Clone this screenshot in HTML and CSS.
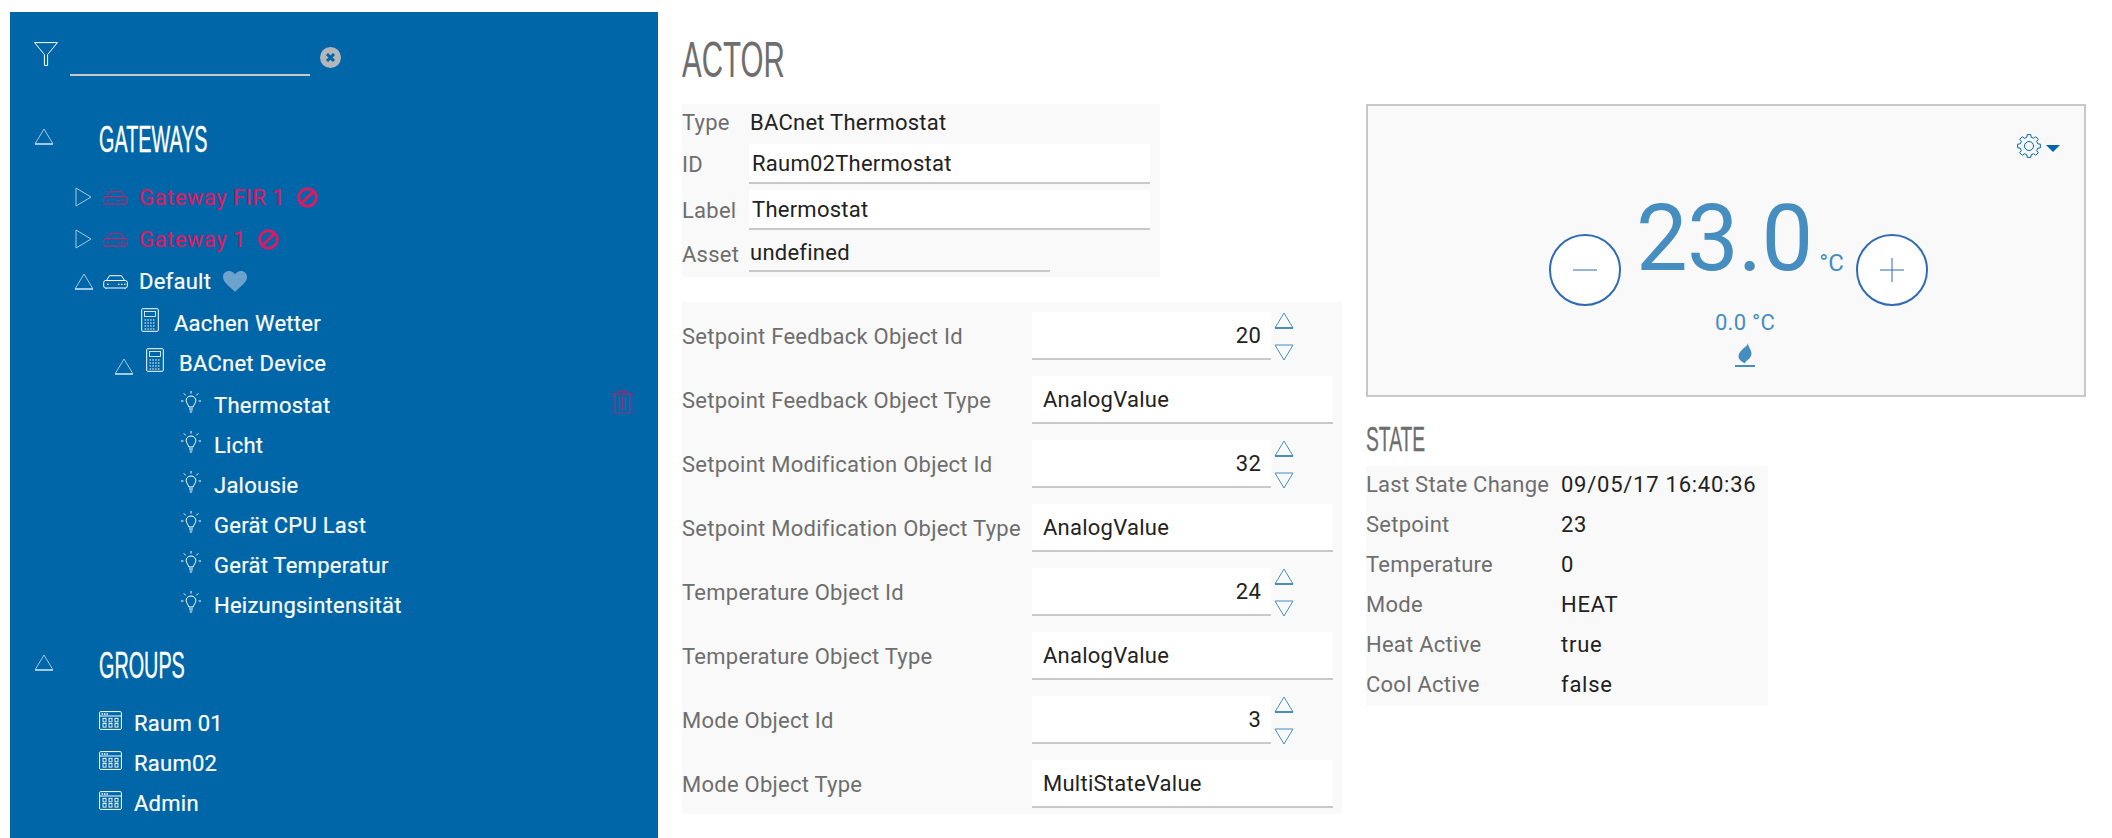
FILE: index.html
```html
<!DOCTYPE html>
<html lang="en">

<head>
    <meta charset="UTF-8">
    <meta name="viewport" content="width=device-width, initial-scale=1.0">
    <title>Actor</title>
    <link rel="stylesheet" href="styles.css">
</head>

<body>
    <!-- icons used more than once -->
    <svg class="defs" width="0" height="0">
        <symbol id="tri-up" viewBox="0 0 20 17">
            <path d="M10 1 L19 16 H1 Z" fill="none" stroke="currentColor" stroke-width="1" />
            <path d="M1 16 H19" stroke="currentColor" stroke-width="2" />
        </symbol>
        <symbol id="tri-down" viewBox="0 0 20 17">
            <path d="M10 16 L19 1 H1 Z" fill="none" stroke="currentColor" stroke-width="1" />
        </symbol>
        <symbol id="tri-right" viewBox="0 0 17 20">
            <path d="M16 10 L1 1 V19 Z" fill="none" stroke="currentColor" stroke-width="1" />
        </symbol>
        <symbol id="gateway" viewBox="0 0 25 14">
            <path d="M3.5 5.5 L6.5 0.7 H18.5 L21.5 5.5" fill="none" stroke="currentColor" />
            <rect x="0.7" y="5.5" width="23.6" height="7.5" rx="2" fill="none" stroke="currentColor" />
            <path d="M3 13 v1 M22 13 v1" stroke="currentColor" />
            <path d="M4 9.3 h1.6 M15 9.3 h1.4 M18 9.3 h1.4 M21 9.3 h1.4" stroke="currentColor" stroke-width="1.3" />
        </symbol>
        <symbol id="ban" viewBox="0 0 21 21">
            <circle cx="10.5" cy="10.5" r="8.8" fill="none" stroke="currentColor" stroke-width="3" />
            <path d="M5 16 L16 5" stroke="currentColor" stroke-width="3" />
        </symbol>
        <symbol id="calc" viewBox="0 0 18 24">
            <rect x="0.7" y="0.7" width="16.6" height="22.6" rx="1" fill="none" stroke="#fff" />
            <rect x="3.5" y="3.5" width="11" height="5" fill="none" stroke="#fff" stroke-width="0.8" />
            <path d="M3.5 12 H14.5 M3.5 15 H14.5 M3.5 18 H14.5 M3.5 21 H14.5" stroke="#fff" stroke-width="1.2" stroke-dasharray="1.6 1.2" />
        </symbol>
        <symbol id="bulb" viewBox="0 0 20 22">
            <path d="M10 5 C6.8 5 5.2 7.3 5.2 9.6 C5.2 12.3 7.4 13.4 7.8 16 H12.2 C12.6 13.4 14.8 12.3 14.8 9.6 C14.8 7.3 13.2 5 10 5 Z" fill="none" stroke="#fff" />
            <path d="M8 18 H12 M8.6 20 H11.4 M9.4 21.7 H10.6" stroke="#fff" />
            <path d="M10 0 V2.6 M2.8 2.4 L4.6 4.4 M17.2 2.4 L15.4 4.4 M0 10 H2.4 M17.6 10 H20" stroke="#fff" />
        </symbol>
        <symbol id="group" viewBox="0 0 23 19">
            <rect x="0.6" y="0.6" width="21.8" height="17.8" rx="1.2" fill="none" stroke="#fff" />
            <path d="M0.6 5 H22.4" stroke="#fff" />
            <path d="M2.6 2.9 H9" stroke="#fff" stroke-width="1.5" stroke-dasharray="1.5 0.9" />
            <rect x="4" y="7.3" width="3" height="3.6" fill="none" stroke="#fff" stroke-width="0.9" />
            <rect x="10" y="7.3" width="3" height="3.6" fill="none" stroke="#fff" stroke-width="0.9" />
            <rect x="16" y="7.3" width="3" height="3.6" fill="none" stroke="#fff" stroke-width="0.9" />
            <rect x="4" y="12.5" width="3" height="3.6" fill="none" stroke="#fff" stroke-width="0.9" />
            <rect x="10" y="12.5" width="3" height="3.6" fill="none" stroke="#fff" stroke-width="0.9" />
            <rect x="16" y="12.5" width="3" height="3.6" fill="none" stroke="#fff" stroke-width="0.9" />
        </symbol>
    </svg>

    <div class="page">
        <!-- left tree -->
        <div class="side">
            <div class="filter">
                <svg class="filter-icon" width="24" height="24" viewBox="0 0 24 24">
                    <path d="M0.6 0.6 H23.4 L13.6 12.6 V23.4 H10.4 V12.6 Z" fill="none" stroke="#fff" />
                </svg>
                <div class="filter-input"></div>
                <svg class="filter-clear" width="21" height="21" viewBox="0 0 21 21">
                    <circle cx="10.5" cy="10.5" r="10.5" fill="#b4b7ba" />
                    <path d="M7 7 L14 14 M14 7 L7 14" stroke="#0066a8" stroke-width="3" />
                </svg>
            </div>

            <div class="head">
                <svg class="tri" width="20" height="17"><use href="#tri-up" /></svg>
                <span class="head-text">GATEWAYS</span>
            </div>

            <div class="tree">
                <div class="row row-gw off">
                    <svg class="tri" width="17" height="20"><use href="#tri-right" /></svg>
                    <svg class="gw" width="25" height="14"><use href="#gateway" /></svg>
                    <span class="wide-name">Gateway FIR 1</span>
                    <svg class="badge" width="21" height="21"><use href="#ban" /></svg>
                </div>
                <div class="row row-gw off">
                    <svg class="tri" width="17" height="20"><use href="#tri-right" /></svg>
                    <svg class="gw" width="25" height="14"><use href="#gateway" /></svg>
                    <span class="wide-name">Gateway 1</span>
                    <svg class="badge" width="21" height="21"><use href="#ban" /></svg>
                </div>
                <div class="row row-gw">
                    <svg class="tri tri-open" width="20" height="17"><use href="#tri-up" /></svg>
                    <svg class="gw" width="25" height="14"><use href="#gateway" /></svg>
                    <span>Default</span>
                    <svg class="heart" width="24" height="21" viewBox="0 0 24 21">
                        <path d="M12 21 C8 16 0 12 0 6 C0 2.5 2.6 0 6 0 C8.6 0 10.8 1.4 12 3.6 C13.2 1.4 15.4 0 18 0 C21.4 0 24 2.5 24 6 C24 12 16 16 12 21 Z" fill="#6ba3cc" />
                    </svg>
                </div>
                <div class="row row-dev">
                    <svg class="ic" width="18" height="24"><use href="#calc" /></svg>
                    <span>Aachen Wetter</span>
                </div>
                <div class="row row-dev2 tight">
                    <svg class="tri" width="20" height="17"><use href="#tri-up" /></svg>
                    <svg class="ic" width="18" height="24"><use href="#calc" /></svg>
                    <span>BACnet Device</span>
                </div>
                <div class="row row-actor">
                    <svg class="ic" width="20" height="22"><use href="#bulb" /></svg>
                    <span>Thermostat</span>
                    <svg class="trash" width="21" height="24" viewBox="0 0 21 24">
                        <path d="M0 4 H21 M7 4 V1 H14 V4" fill="none" stroke="#c2185b" stroke-width="1.2" />
                        <path d="M3 4 V23 H18 V4" fill="none" stroke="#8f3a80" stroke-width="1.2" />
                        <path d="M7.5 7 V20 M10.5 7 V20 M13.5 7 V20" stroke="#8f3a80" stroke-width="1.2" />
                    </svg>
                </div>
                <div class="row row-actor tight">
                    <svg class="ic" width="20" height="22"><use href="#bulb" /></svg>
                    <span>Licht</span>
                </div>
                <div class="row row-actor tight">
                    <svg class="ic" width="20" height="22"><use href="#bulb" /></svg>
                    <span>Jalousie</span>
                </div>
                <div class="row row-actor tight">
                    <svg class="ic" width="20" height="22"><use href="#bulb" /></svg>
                    <span>Gerät CPU Last</span>
                </div>
                <div class="row row-actor tight">
                    <svg class="ic" width="20" height="22"><use href="#bulb" /></svg>
                    <span>Gerät Temperatur</span>
                </div>
                <div class="row row-actor tight">
                    <svg class="ic" width="20" height="22"><use href="#bulb" /></svg>
                    <span>Heizungsintensität</span>
                </div>
            </div>

            <div class="head head-groups">
                <svg class="tri" width="20" height="17"><use href="#tri-up" /></svg>
                <span class="head-text">GROUPS</span>
            </div>

            <div class="tree tree-groups">
                <div class="row row-group tight">
                    <svg class="ic" width="23" height="19"><use href="#group" /></svg>
                    <span>Raum 01</span>
                </div>
                <div class="row row-group tight">
                    <svg class="ic" width="23" height="19"><use href="#group" /></svg>
                    <span>Raum02</span>
                </div>
                <div class="row row-group tight">
                    <svg class="ic" width="23" height="19"><use href="#group" /></svg>
                    <span>Admin</span>
                </div>
            </div>
        </div>

        <!-- actor form -->
        <div class="form-col">
            <h1 class="title"><span>ACTOR</span></h1>
            <div class="panel-info">
                <div class="info-row info-text"><label>Type</label><span class="val">BACnet Thermostat</span></div>
                <div class="info-row info-id"><label>ID</label><div class="field">Raum02Thermostat</div></div>
                <div class="info-row info-label"><label>Label</label><div class="field">Thermostat</div></div>
                <div class="info-row info-text info-asset"><label>Asset</label><div class="val asset">undefined</div></div>
            </div>

            <div class="panel-obj">
                <div class="obj-row">
                    <label>Setpoint Feedback Object Id</label>
                    <div class="field num">20</div>
                    <div class="stepper">
                        <svg width="20" height="17"><use href="#tri-up" /></svg>
                        <svg width="20" height="17"><use href="#tri-down" /></svg>
                    </div>
                </div>
                <div class="obj-row">
                    <label>Setpoint Feedback Object Type</label>
                    <div class="field wide">AnalogValue</div>
                </div>
                <div class="obj-row">
                    <label>Setpoint Modification Object Id</label>
                    <div class="field num">32</div>
                    <div class="stepper">
                        <svg width="20" height="17"><use href="#tri-up" /></svg>
                        <svg width="20" height="17"><use href="#tri-down" /></svg>
                    </div>
                </div>
                <div class="obj-row">
                    <label>Setpoint Modification Object Type</label>
                    <div class="field wide">AnalogValue</div>
                </div>
                <div class="obj-row">
                    <label>Temperature Object Id</label>
                    <div class="field num">24</div>
                    <div class="stepper">
                        <svg width="20" height="17"><use href="#tri-up" /></svg>
                        <svg width="20" height="17"><use href="#tri-down" /></svg>
                    </div>
                </div>
                <div class="obj-row">
                    <label>Temperature Object Type</label>
                    <div class="field wide">AnalogValue</div>
                </div>
                <div class="obj-row">
                    <label>Mode Object Id</label>
                    <div class="field num">3</div>
                    <div class="stepper">
                        <svg width="20" height="17"><use href="#tri-up" /></svg>
                        <svg width="20" height="17"><use href="#tri-down" /></svg>
                    </div>
                </div>
                <div class="obj-row">
                    <label>Mode Object Type</label>
                    <div class="field wide">MultiStateValue</div>
                </div>
            </div>
        </div>

        <!-- thermostat and state -->
        <div class="state-col">
            <div class="card">
                <div class="card-menu">
                    <svg width="24" height="24" viewBox="0 0 24 24">
                        <path d="M20.73 9.82 L23.36 10.2 V13.8 L20.73 14.18 L19.71 16.64 L21.3 18.76 L18.76 21.3 L16.64 19.71 L14.18 20.73 L13.8 23.36 H10.2 L9.82 20.73 L7.36 19.71 L5.24 21.3 L2.7 18.76 L4.29 16.64 L3.27 14.18 L0.64 13.8 V10.2 L3.27 9.82 L4.29 7.36 L2.7 5.24 L5.24 2.7 L7.36 4.29 L9.82 3.27 L10.2 0.64 H13.8 L14.18 3.27 L16.64 4.29 L18.76 2.7 L21.3 5.24 L19.71 7.36 Z" fill="none" stroke="#0066a8" />
                        <circle cx="12" cy="12" r="4.5" fill="none" stroke="#0066a8" />
                    </svg>
                    <span class="caret"></span>
                </div>
                <div class="dial">
                    <div class="round">
                        <svg width="24" height="24" viewBox="0 0 24 24"><path d="M0 12 H24" stroke="#2f6ab5" /></svg>
                    </div>
                    <div class="temp">23.0</div>
                    <div class="unit">°C</div>
                    <div class="round">
                        <svg width="24" height="24" viewBox="0 0 24 24"><path d="M0 12 H24 M12 0 V24" stroke="#2f6ab5" /></svg>
                    </div>
                </div>
                <div class="current">0.0 °C</div>
                <svg class="flame" width="20" height="24" viewBox="0 0 20 24">
                    <path d="M13 0 C12.5 4 3.5 7 3.5 13.5 C3.5 16.5 6.5 18.5 10 20.5 C9.5 18 16.5 16 16.5 10.5 C16.5 6.5 13 4 13 0 Z" fill="#468dc0" />
                    <path d="M0 23 H20" stroke="#468dc0" stroke-width="2" />
                </svg>
            </div>

            <h2 class="subtitle"><span>STATE</span></h2>
            <div class="panel-state">
                <div class="state-row"><label>Last State Change</label><span class="state-val">09/05/17 16:40:36</span></div>
                <div class="state-row"><label>Setpoint</label><span class="state-val">23</span></div>
                <div class="state-row"><label>Temperature</label><span class="state-val">0</span></div>
                <div class="state-row"><label>Mode</label><span class="state-val">HEAT</span></div>
                <div class="state-row"><label>Heat Active</label><span class="state-val">true</span></div>
                <div class="state-row"><label>Cool Active</label><span class="state-val">false</span></div>
            </div>
        </div>
    </div>
</body>

</html>
```

FILE: styles.css
```css
body {
    margin: 0;
    background-color: #fff;
    color: #222;
    font-family: "Roboto", "Liberation Sans", sans-serif;
    font-size: 22px;
    letter-spacing: 0.25px;
}

.defs {
    display: block;
}

.page {
    display: flex;
    height: 838px;
    overflow: hidden;
    padding-left: 10px;
    box-sizing: border-box;
}

/* left tree */
.side {
    width: 648px;
    margin-top: 12px;
    padding: 30px 24px 0 24px;
    box-sizing: border-box;
    background-color: #0066a8;
    color: #fff;
    flex-shrink: 0;
}

.filter {
    display: flex;
    align-items: flex-start;
    height: 34px;
}

.filter-input {
    width: 240px;
    height: 32px;
    margin-left: 12px;
    border-bottom: 2px solid #c8c8c8;
}

.filter-clear {
    margin: 5px 0 0 10px;
}

.head {
    display: flex;
    height: 40px;
    margin-top: 44px;
    align-items: center;
}

.head .tri {
    width: 20px;
    margin-bottom: 7px;
}

.tri {
    color: #a3c8e2;
}

.head-text {
    display: inline-block;
    margin-left: 45px;
    font-family: "Liberation Sans", sans-serif;
    font-size: 36px;
    line-height: 40px;
    letter-spacing: 0;
    -webkit-text-stroke: 0.4px #fff;
    transform: scaleX(0.55);
    transform-origin: left center;
}

.head-groups {
    margin-top: 21px;
}

.tree {
    margin-top: 17px;
}

.tree-groups {
    margin-top: 17px;
}

.row {
    display: flex;
    height: 40px;
    margin-top: 2px;
    align-items: center;
    white-space: nowrap;
    -webkit-text-stroke: 0.2px currentColor;
}

.row.tight {
    margin-top: 0;
}

.ic {
    margin-bottom: 6px;
    flex-shrink: 0;
}

.row-gw {
    padding-left: 41px;
}

.row-gw .tri {
    margin: 0 11px 0 0;
}

.row-gw .tri-open {
    margin: 0 9px 0 -1px;
}

.row-gw .gw {
    margin: 2px 11px 0 0;
}

.off {
    color: #dc1a64;
}

.wide-name {
    letter-spacing: 0.5px;
}

.badge {
    margin-left: 12px;
}

.heart {
    margin-left: 12px;
}

.row-dev {
    padding-left: 107px;
}

.row-dev .ic {
    margin-right: 15px;
}

.row-dev2 {
    padding-left: 80px;
}

.row-dev2 .tri {
    margin: 6px 12px 0 0;
}

.row-dev2 .ic {
    margin-right: 15px;
}

.row-actor {
    padding-left: 147px;
}

.row-actor .ic {
    margin-right: 13px;
}

.trash {
    margin: 0 1px 6px auto;
}

.row-group {
    padding-left: 65px;
}

.row-group .ic {
    margin-right: 12px;
}

/* actor form */
.form-col {
    width: 662px;
    margin-left: 24px;
    flex-shrink: 0;
}

.title {
    height: 104px;
    margin: 0;
    font-family: "Liberation Sans", sans-serif;
    font-size: 50px;
    font-weight: normal;
    line-height: 120px;
    letter-spacing: 0;
    color: #6e6e6e;
    box-sizing: border-box;
}

.title span,
.subtitle span {
    display: inline-block;
    transform: scaleX(0.59);
    transform-origin: left center;
}

label {
    color: #6e6e6e;
}

.panel-info {
    width: 478px;
    height: 173px;
    background-color: #f9f9f9;
}

.info-row {
    display: flex;
    align-items: center;
}

.info-row label {
    width: 67px;
    flex-shrink: 0;
}

.info-text {
    height: 36px;
}

.info-id {
    margin-top: 4px;
}

.info-label {
    margin-top: 6px;
}

.info-asset {
    margin-top: 6px;
}

.val {
    padding-left: 1px;
}

.asset {
    width: 300px;
    line-height: 34px;
    border-bottom: 2px solid #c8c8c8;
}

.field {
    display: flex;
    align-items: center;
    box-sizing: border-box;
    background-color: #fff;
    border-bottom: 2px solid #c8c8c8;
}

.info-row .field {
    width: 401px;
    height: 40px;
    padding-left: 3px;
}

.panel-obj {
    width: 660px;
    margin-top: 25px;
    padding: 10px 0 6px;
    box-sizing: border-box;
    background-color: #f9f9f9;
    display: flex;
    flex-direction: column;
    gap: 16px;
}

.obj-row {
    display: flex;
    height: 48px;
    align-items: center;
}

.obj-row label {
    width: 350px;
    flex-shrink: 0;
}

.obj-row .field {
    height: 48px;
}

.field.num {
    width: 239px;
    padding-right: 10px;
    justify-content: flex-end;
}

.field.wide {
    width: 301px;
    padding-left: 11px;
}

.stepper {
    display: flex;
    height: 49px;
    margin-left: 3px;
    flex-direction: column;
    justify-content: space-between;
    color: #468dc0;
}

/* thermostat and state */
.state-col {
    width: 720px;
    margin-left: 22px;
    flex-shrink: 0;
}

.card {
    position: relative;
    width: 720px;
    height: 293px;
    margin-top: 104px;
    box-sizing: border-box;
    border: 2px solid #c8c8c8;
    background-color: #f9f9f9;
    display: flex;
    flex-direction: column;
    align-items: center;
    color: #468dc0;
}

.card-menu {
    position: absolute;
    top: 28px;
    right: 24px;
    display: flex;
    align-items: center;
}

.caret {
    margin: 4px 0 0 5px;
    border-top: 7px solid #0066a8;
    border-left: 7px solid transparent;
    border-right: 7px solid transparent;
}

.dial {
    display: flex;
    align-items: flex-end;
    height: 200px;
    margin-left: 25px;
}

.round {
    display: flex;
    width: 72px;
    height: 72px;
    box-sizing: border-box;
    border: 2px solid #2f6ab5;
    border-radius: 50%;
    background-color: #fff;
    align-items: center;
    justify-content: center;
}

.temp {
    margin: 0 0 32px 15px;
    font-size: 92px;
    line-height: 70px;
    letter-spacing: -0.8px;
}

.unit {
    margin: 0 12px 31px 7px;
    font-size: 24px;
    line-height: 24px;
    letter-spacing: 0;
}

.current {
    margin: 3px 0 0 38px;
    line-height: 28px;
}

.flame {
    margin: 6px 0 0 38px;
}

.subtitle {
    height: 69px;
    margin: 0;
    padding-top: 22px;
    box-sizing: border-box;
    font-family: "Liberation Sans", sans-serif;
    font-size: 35px;
    font-weight: normal;
    line-height: 40px;
    letter-spacing: 0;
    color: #6e6e6e;
    -webkit-text-stroke: 0.3px #6e6e6e;
}

.subtitle span {
    transform: scaleX(0.55);
}

.panel-state {
    width: 402px;
    background-color: #f9f9f9;
}

.state-row {
    display: flex;
    height: 40px;
    box-sizing: border-box;
    padding-bottom: 3px;
    align-items: center;
}

.state-row label {
    width: 195px;
}

.state-val {
    letter-spacing: 0.75px;
}
```
